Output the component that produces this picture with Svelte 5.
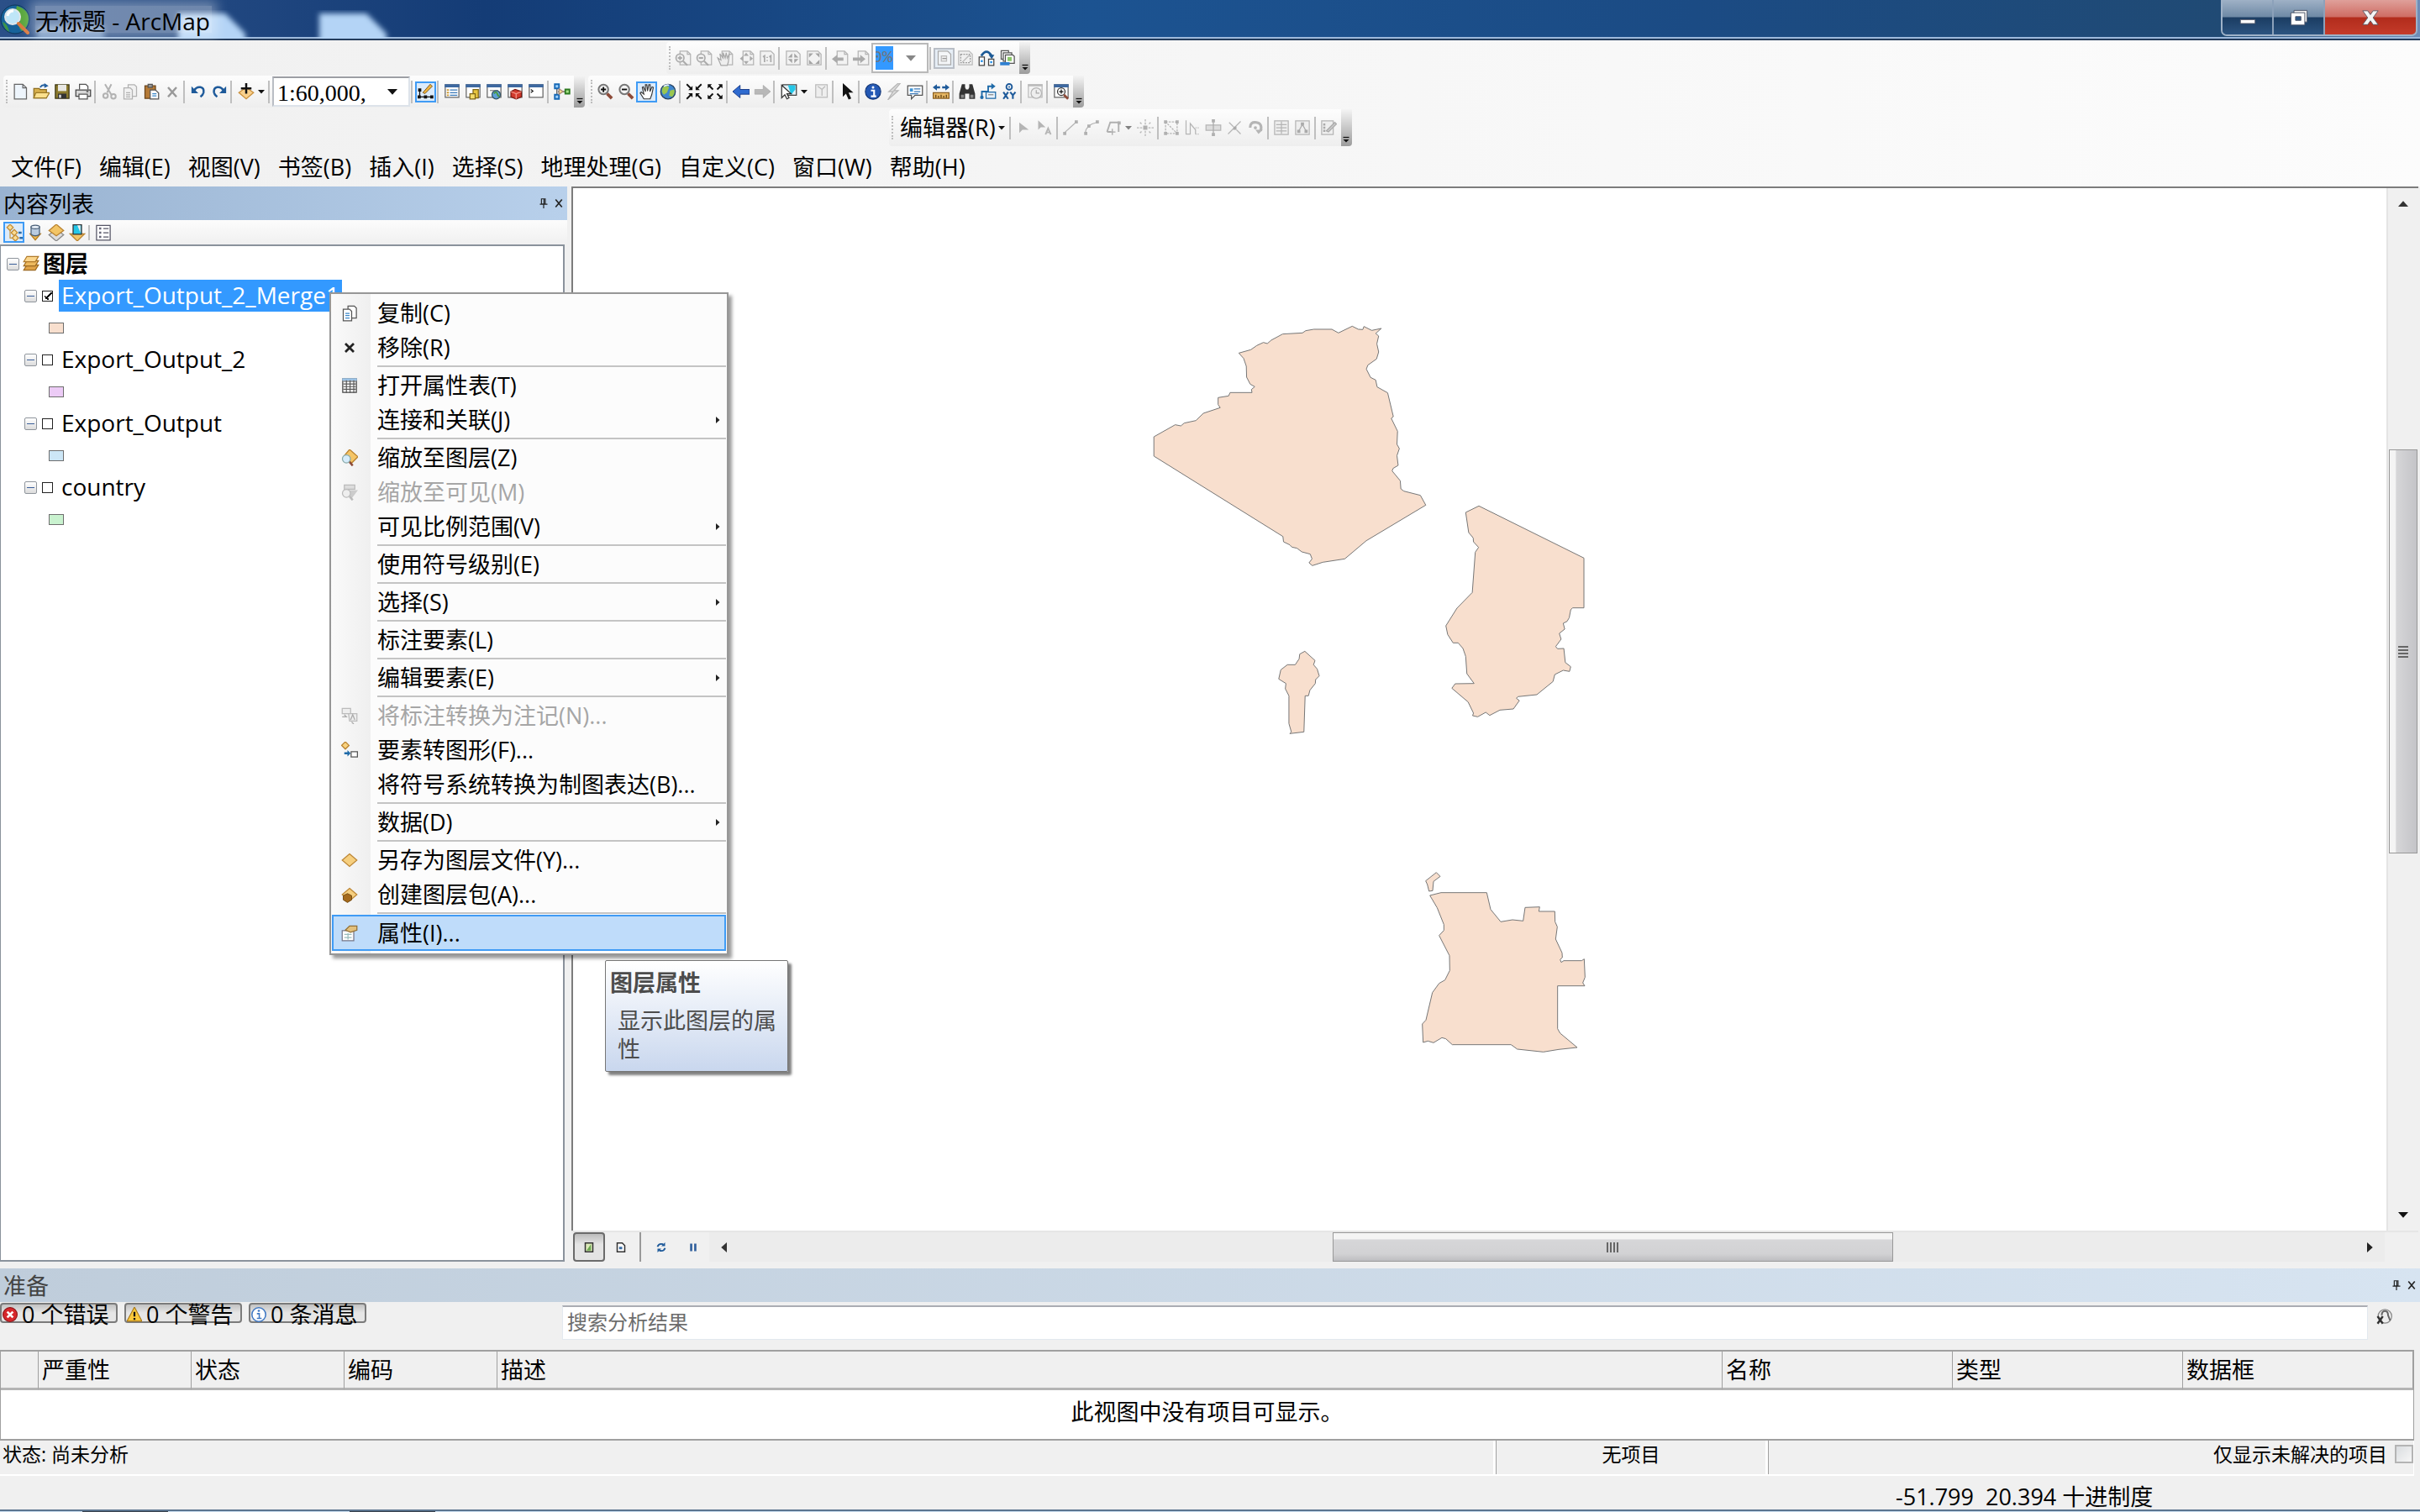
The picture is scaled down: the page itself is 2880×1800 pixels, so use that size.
<script lang="ts">
    interface Tool {
        icon?: string;
        label?: string;
        kind?: "sep" | "active" | "drop" | "scale" | "percent" | "editor";
        off?: boolean;
    }

    interface MenuItem {
        label: string;
        icon?: string;
        sub?: boolean;
        off?: boolean;
        current?: boolean;
        line?: boolean;
    }

    const sep: Tool = { kind: "sep" };

    // shared icon parts, all on a 16 unit grid
    const page = `<path d="M5 1.5h7l3 3v10H5z" fill="#f2f2f2" stroke="#b4b4b4"/><path d="M12 1.5v3h3" fill="none" stroke="#b4b4b4"/>`;
    const win = `<rect x="1.5" y="1.5" width="13" height="12" fill="#fff" stroke="#666"/><path d="M1 1h14v3H1z" fill="#3d68a0"/>`;
    const lens = `<circle cx="6.5" cy="6" r="4.6" fill="#f4f4f4" stroke="#777" stroke-width="1.6"/><path d="M10 10l4.5 4.5" stroke="#8c4a38" stroke-width="3"/>`;
    const diamond = `<path d="M8 2l7 6-7 6-7-6z" fill="#f6cf7f" stroke="#bd8736"/>`;

    const icons: Record<string, string> = {
        newDoc: `<path d="M2.500 1h8l3.500 3.500V15h-11.500z" fill="#eef5fc" stroke="#666"/><path d="M10.500 1v3.500H14" fill="none" stroke="#666"/>`,
        open: `<path d="M1 5h5l1 1h6v8H1z" fill="#d8b04c" stroke="#8d6d20"/><path d="M3 9h13l-3 5H1z" fill="#fbe08d" stroke="#9a7927"/><path d="M7 4q2-3 5-2" fill="none" stroke="#2560a0" stroke-width="1.500"/><path d="M11 0l4 2.500-4 2z" fill="#2560a0"/>`,
        save: `<path d="M1.500 1.500h13v13h-13z" fill="#8c7b2e" stroke="#3d3714"/><path d="M4 1.500h8v6H4z" fill="#e8e8e4"/><path d="M4 10h8v4.500H4z" fill="#333"/><path d="M5 11h2v3H5z" fill="#ddd"/>`,
        print: `<path d="M4.500 6V1h6l2 2v3" fill="#fff" stroke="#555"/><path d="M1 6.500h14v6H1z" fill="#d8d8d8" stroke="#444"/><path d="M4 10.500h8v4.500H4z" fill="#fff" stroke="#555"/><path d="M11 8h2" stroke="#333"/>`,
        cut: `<g fill="none" stroke="#b2b2b2" stroke-width="1.600"><path d="M4 1l6 10M10 1L6 9"/><circle cx="4.500" cy="12" r="2.200"/><circle cx="12" cy="12.500" r="2.200"/></g>`,
        copyOff: `<g fill="#f2f2f2" stroke="#b2b2b2"><path d="M6 1.500h6l2 2v9H6z"/><path d="M2 4.500h6l2 2v8.500H2z"/><path d="M4 9h4M4 11h4M4 13h4"/></g>`,
        paste: `<path d="M2 2.500h10v12H2z" fill="#b57a37" stroke="#6b451b"/><path d="M5 1h4v3H5z" fill="#999" stroke="#555"/><path d="M7 6.500h5l3 3V15H7z" fill="#fff" stroke="#555"/><path d="M9 10h4M9 12h4" stroke="#3b88c9"/>`,
        del: `<path d="M4 4l8 9M12 4l-8 9" stroke="#999" stroke-width="2"/>`,
        undo: `<path d="M4 7c3-5 10-4 9 2-.500 2-1.500 3-3 4" fill="none" stroke="#1e5a9a" stroke-width="2"/><path d="M1.500 3v6.500H8z" fill="#1e5a9a"/>`,
        redo: `<path d="M12 7C9 2 2 3 3 9c.500 2 1.500 3 3 4" fill="none" stroke="#1e5a9a" stroke-width="2"/><path d="M14.500 3v6.500H8z" fill="#1e5a9a"/>`,
        add: `<path d="M8 4l7 5-7 6-7-6z" fill="#f9d08c" stroke="#c98f3b"/><path d="M8 0v10M3 5h10" stroke="#111" stroke-width="2"/>`,
        sketch: `<path d="M2 6v7h12" fill="none" stroke="#111"/><path d="M0 11.500h3v3H0zM6 11.500h3v3H6zM12 11.500h3v3h-3zM.500 5h3v3h-3z" fill="#111"/><path d="M5 9l7-8 2 2-7 7z" fill="#f0b33a" stroke="#7b5b2a" stroke-width=".800"/>`,
        toc: `${win}<path d="M3 6.500h2M3 9h2M3 11.500h2" stroke="#cc9933" stroke-width="1.500"/><path d="M6 6.500h7M6 9h7M6 11.500h7" stroke="#3878b8"/>`,
        catalog: `${win}<path d="M8 6h5v8H8z" fill="#e8c53e" stroke="#7e6515"/><path d="M5 10h5v5H5z" fill="#f4dc6a" stroke="#7e6515"/>`,
        searchWin: `${win}<path d="M4 7h8" stroke="#888"/><circle cx="10" cy="11" r="4" fill="#5ea0d8" stroke="#356"/><path d="M8 10q2-3 3 0t2 2" stroke="#4c9b3d" fill="none" stroke-width="1.500"/>`,
        toolbox: `${win}<path d="M4 8l4-2 6 2v5l-5 2-5-2z" fill="#d23a2c" stroke="#7c1a12"/><path d="M4 8l5 2 5-2M9 10v5" stroke="#f39a8c" fill="none"/>`,
        python: `${win}<path d="M3 6l2 1.500L3 9" fill="none" stroke="#222"/>`,
        model: `<path d="M3 3v10M4 8h9" stroke="#555"/><path d="M1 1h4v4H1zM1 11h4v4H1z" fill="#9ed2ff" stroke="#1668b5" stroke-width="1.500"/><path d="M5 5.500l4 2.500-4 2.500z" fill="#ffe28a" stroke="#a87"/><path d="M11 6h4v4h-4z" fill="#a9e38a" stroke="#2d7a20" stroke-width="1.500"/>`,
        zoomIn: `${lens}<path d="M4 6h5M6.500 3.500v5" stroke="#111" stroke-width="1.500"/>`,
        zoomOut: `${lens}<path d="M4 6h5" stroke="#111" stroke-width="1.500"/>`,
        hand: `<path d="M5 15L1.500 9.500l1-1L5 10.500 3.500 4l1-.500L6.500 8 6.500 1.500h1.300L8.500 7.500l1.200-6H11L10.800 8l2-4.500 1.200.500-1.500 7-1.500 4z" fill="#fff" stroke="#333" stroke-width=".900"/>`,
        globe: `<circle cx="8" cy="8" r="7" fill="#3f86cf" stroke="#26405f"/><path d="M3 4q4-3 6 0l-2 5-3 2q-3-3-1-7zM10 7l4-1q1 4-2 7l-3-1z" fill="#9bc64e"/><path d="M4 3q3-2 5-1" stroke="#e8f3ff" stroke-width="1.500" fill="none"/>`,
        fixedIn: `<path d="M1 1l4 4M15 1l-4 4M1 15l4-4M15 15l-4-4" stroke="#111" stroke-width="1.500"/><path d="M6.500 6.500h-4l4-4zM9.500 6.500h4l-4-4zM6.500 9.500h-4l4 4zM9.500 9.500h4l-4 4z" fill="#111"/>`,
        fixedOut: `<path d="M2 2l4 4M14 2l-4 4M2 14l4-4M14 14l-4-4" stroke="#111" stroke-width="1.500"/><path d="M1 1h4L1 5zM15 1h-4l4 4zM1 15h4l-4-4zM15 15h-4l4-4z" fill="#111"/>`,
        back: `<path d="M0 8l7-6v4h9v4.500H7V14z" fill="#2f6bd0" stroke="#1c3f8c" stroke-width=".800"/>`,
        forward: `<path d="M16 8L9 2v4H1v4.500h8V14z" fill="#b8b8b8" stroke="#a2a2a2" stroke-width=".500"/>`,
        select: `<path d="M2 1.500h13v10H2z" fill="#dfeff5" stroke="#444"/><path d="M7 2h7v4l-4 5z" fill="#25c7e8"/><path d="M1 2v12l3-3 2 4 2-1-2-4h4z" fill="#fff" stroke="#333"/>`,
        clear: `<path d="M3 1.500h11v12H3z" fill="#eee" stroke="#bbb"/><path d="M5 3l4 3 3-3M9 6v6" fill="none" stroke="#bbb"/>`,
        pointer: `<path d="M4 0v13l3-3 2.500 5.500 2.500-1L9.500 9H14z" fill="#111"/>`,
        info: `<circle cx="8" cy="8" r="7.300" fill="#2459b5" stroke="#173b7c"/><path d="M6 7h3v5M6 12.500h5" stroke="#fff" stroke-width="1.700" fill="none"/><circle cx="8" cy="4" r="1.200" fill="#fff"/>`,
        bolt: `<path d="M12 0L3 8h4L2 16l10-9H8l6-7z" fill="#ddd" stroke="#b5b5b5"/>`,
        popup: `<path d="M1 2.500h14v9H8L4.500 15v-3.500H1z" fill="#fff" stroke="#555"/><path d="M3 5h3v3H3z" fill="#3d93d6"/><path d="M7 5.500h6M7 8h6M3 10h8" stroke="#3878b8"/>`,
        measure: `<path d="M0 4l4-3v2h3v2H4v2zM16 4l-4-3v2H9v2h3v2z" fill="#1e5a9a"/><path d="M.500 9h15v5.500H.500z" fill="#e6b765" stroke="#8c6021"/><path d="M3 11v3M5.500 12v2M8 11v3M10.500 12v2M13 11v3" stroke="#5b3c10"/>`,
        find: `<path d="M3 1h3v3l1 2h2l1-2V1h3l2.500 9v5H10v-5H6v5H.500v-5z" fill="#333"/><path d="M2 11h3v3H2zM11 11h3v3h-3z" fill="#888"/>`,
        route: `<path d="M2 14V8h6V3h4" fill="none" stroke="#1e6aa8" stroke-width="1.500"/><path d="M11 0l4 3-4 3z" fill="#1e6aa8"/><circle cx="2" cy="13.500" r="1.700" fill="#1e6aa8"/><path d="M6 8.500h9v6H6z" fill="#e6f1fa" stroke="#1e6aa8"/><path d="M8 11h5" stroke="#888"/>`,
        xy: `<circle cx="8" cy="3.500" r="2.700" fill="none" stroke="#1e5a9a" stroke-width="1.500"/><circle cx="8" cy="3.500" r=".800" fill="#1e5a9a"/><path d="M2.500 8.500l4.500 6.500M7 8.500L2.500 15M9 8.500l2.500 3 2.500-3M11.500 11.500V15" stroke="#1e5a9a" stroke-width="1.700" fill="none"/>`,
        clock: `<path d="M1.500 1.500h13v12h-13z" fill="#f4f4f4" stroke="#bbb"/><path d="M1 1h14v2H1z" fill="#bbb"/><circle cx="9" cy="9.500" r="5" fill="#eee" stroke="#b5b5b5"/><path d="M9 6.500v3h3" stroke="#aaa" fill="none"/>`,
        magnifier: `${win}<circle cx="8" cy="8" r="3.600" fill="#fff" stroke="#333"/><path d="M6 8h4M8 6v4" stroke="#111"/><path d="M10.500 11l4 4" stroke="#8c4a38" stroke-width="2.200"/>`,
        pageIn: `${page}<circle cx="5" cy="8" r="3.800" fill="#eee" stroke="#aaa" stroke-width="1.300"/><path d="M3 8h4M5 6v4M8 11l4 4" stroke="#aaa" stroke-width="1.500"/>`,
        pageOut: `${page}<circle cx="5" cy="8" r="3.800" fill="#eee" stroke="#aaa" stroke-width="1.300"/><path d="M3 8h4M8 11l4 4" stroke="#aaa" stroke-width="1.500"/>`,
        pageHand: `${page}<path d="M4 15L1 8l3 2L3 4l3 4V3l2 5 1-5 1 5 2-4-1 8-1 3z" fill="#eee" stroke="#aaa"/>`,
        pageFull: `${page}<path d="M8 3l2.500 3h-5zM8 14l2.500-3h-5zM2 8.500L5 6v5zM14.500 8.500l-3-2.500v5z" fill="#aaa"/>`,
        pageOne: `<path d="M1.500 1.500h10l3 3v10h-13z" fill="#f2f2f2" stroke="#b4b4b4"/><path d="M4 7l1.500-1v6M10 7l1.500-1v6M8 7v1M8 10v1" fill="none" stroke="#aaa" stroke-width="1.400"/>`,
        pageFixIn: `<path d="M1.500 1.500h10l3 3v10h-13z" fill="#f2f2f2" stroke="#b4b4b4"/><path d="M7 7.500H3l4-4zM9 7.500h4l-4-4zM7 9H3l4 4zM9 9h4l-4 4z" fill="#a5a5a5"/>`,
        pageFixOut: `<path d="M1.500 1.500h10l3 3v10h-13z" fill="#f2f2f2" stroke="#b4b4b4"/><path d="M3 3.500h4l-4 4zM13 3.500H9l4 4zM3 13.500h4l-4-4zM13 13.500H9l4-4z" fill="#a5a5a5"/>`,
        pageBack: `${page}<path d="M0 9l5-4v2.500h6v3H5V13z" fill="#aaa"/>`,
        pageNext: `${page}<path d="M12 9L7 5v2.500H0v3h7V13z" fill="#aaa"/>`,
        draft: `<path d="M2 1.500h9l3 3v10H2z" fill="#f4f6f8" stroke="#aaa"/><path d="M5 6h5v5H5z" fill="#eee" stroke="#bbb"/><path d="M6 8.500h4" stroke="#999"/>`,
        focus: `<path d="M1.500 1.500h10l3 3v10h-13z" fill="#f0f0f0" stroke="#bbb"/><path d="M3.500 4.500h9v8h-9z" fill="none" stroke="#999" stroke-dasharray="1.500 1"/><path d="M5 12l7-7" stroke="#bbb"/>`,
        change: `<path d="M3 6q5-8 10 0" fill="none" stroke="#1c5a96" stroke-width="2.200"/><path d="M10 5h5.500L13 9z" fill="#1c5a96"/><path d="M1 7h5v8H1zM10 9h5v6h-5z" fill="#fff" stroke="#444"/><path d="M2.500 10h2v2h-2zM11.500 11h2v2h-2z" fill="#2f94e8"/>`,
        pages: `<path d="M2 1h7v8H2z" fill="#fff" stroke="#555"/><path d="M4 3h8v8H4z" fill="#fff" stroke="#555"/><path d="M6 5h7l1.500 1.500V13H6z" fill="#fff" stroke="#555"/><path d="M8 7h4v4H8z" fill="#8cc66a"/><path d="M1 12h9v3H1z" fill="#2f80d0"/>`,
        arrowOff: `<path d="M4 3v10l3-3h6z" fill="#b5b5b5"/>`,
        arrowA: `<path d="M2 1v9l2.500-2.500H9z" fill="#b5b5b5"/><path d="M9 14.500l2.500-6 2.500 6M10 12.500h3" stroke="#b5b5b5" fill="none" stroke-width="1.500"/>`,
        line: `<path d="M2 13L13 3" stroke="#b5b5b5"/><path d="M1 12h3v3H1zM12 1h3v3h-3z" fill="#b0b0b0"/>`,
        arc: `<path d="M2 13Q3 5 13 3" stroke="#b5b5b5" fill="none"/><path d="M1 12h3v3H1zM12 1h3v3h-3zM4 5h3v3H4z" fill="#b0b0b0"/>`,
        trace: `<path d="M2 12L5 3h8v9M2 12h4" stroke="#b0b0b0" fill="none" stroke-width="1.500"/><path d="M7 9v6M4 12h6" stroke="#aaa"/><path d="M12 2h3v3h-3z" fill="#b0b0b0"/>`,
        snap: `<path d="M8 0v5M8 11v5M0 8h5M11 8h5M3 3l2 2M13 3l-2 2M3 13l2-2M13 13l-2-2" stroke="#b5b5b5" stroke-dasharray="2 1"/><path d="M6 6h4v4H6z" fill="#b0b0b0"/>`,
        reshape: `<path d="M2.500 2.500v11h11zM2.500 2.500h11v11" fill="none" stroke="#b5b5b5" stroke-dasharray="2 1"/><path d="M1 1h3v3H1zM12 1h3v3h-3zM1 12h3v3H1zM12 12h3v3h-3z" fill="#b0b0b0"/>`,
        cutPoly: `<path d="M2 1v13h4V4l5 6v4" fill="none" stroke="#b5b5b5"/><path d="M11 8h4M11 14h4" stroke="#b5b5b5" stroke-dasharray="1 1"/>`,
        split: `<path d="M1 5.500h14v5H1z" fill="#ddd" stroke="#b5b5b5"/><path d="M8 1v14" stroke="#aaa"/><path d="M6.500 0h3v3h-3zM6.500 13h3v3h-3z" fill="#b0b0b0"/>`,
        splitLine: `<path d="M2 14L14 2M3 3l4 4M10 10l4 4" stroke="#b5b5b5"/><path d="M7 7h3v3H7z" fill="#aaa"/>`,
        rotate: `<path d="M3 8q0-6 6-5t4 8" fill="none" stroke="#b5b5b5" stroke-width="2.500"/><path d="M8 10h7l-4 4z" fill="#b5b5b5"/><circle cx="8" cy="8" r="1.500" fill="#b5b5b5"/>`,
        attrs: `<path d="M1.500 1.500h13v13h-13z" fill="#eee" stroke="#b5b5b5"/><path d="M3 5h10M3 8h10M3 11h10M8 2v12" stroke="#b5b5b5"/>`,
        props: `<path d="M1.500 1.500h13v13h-13z" fill="#eee" stroke="#b5b5b5"/><path d="M4 12l4-7 4 7" stroke="#aaa" fill="none"/><path d="M6.500 3h3v3h-3zM3 10h3v3H3zM10 10h3v3h-3z" fill="#aaa"/>`,
        template: `<path d="M1.500 1.500h11v13h-11z" fill="#eee" stroke="#b5b5b5"/><path d="M3 4h2v2H3zM3 7h2v2H3zM3 10h2v2H3z" fill="#aaa"/><path d="M6 11l8-8 1.500 1.500L8 12z" fill="#ccc" stroke="#aaa"/>`,
        byDraw: `<path d="M4 6v7h4M8 6v6" stroke="#c99a45" fill="none"/><path d="M4 0l3 3-3 3-3-3zM8 5l3 3-3 3-3-3zM9 10l3 3-3 3-3-3z" fill="#f9dd95" stroke="#c48d35"/><path d="M12 8h3M13 13h3" stroke="#2c6ca8" stroke-width="2"/>`,
        bySource: `<path d="M3 9h10l-5 6z" fill="#f0bb52" stroke="#b67d22"/><path d="M4 2.500v7q4 3 8 0v-7z" fill="#b9cbe0" stroke="#4b6078"/><ellipse cx="8" cy="2.500" rx="4" ry="1.700" fill="#e8f0f8" stroke="#4b6078"/>`,
        byVisible: `<path d="M8 5l7 5-7 6-7-6z" fill="#ddd" stroke="#888"/><path d="M8 0l7 6-7 5-7-5z" fill="#f3c566" stroke="#b9822f"/>`,
        bySelect: `<path d="M1 9h14l-7 7z" fill="#f3c566" stroke="#b9822f"/><path d="M4 .500h8v9H4z" fill="#25c7e8" stroke="#333"/><path d="M8 1h3v7z" fill="#eee"/>`,
        options: `<path d="M1.500 1h13v14h-13z" fill="#fff" stroke="#556"/><path d="M4 3h2v2H4zM4 7h2v2H4zM4 11h2v2H4z" fill="#667"/><path d="M8 4h5M8 8h5M8 12h5" stroke="#556"/>`,
        layers: `<path d="M4 9h11l-3 5H1z" fill="#e0a348" stroke="#9d6a20"/><path d="M4 5h11l-3 5H1z" fill="#edb95f" stroke="#9d6a20"/><path d="M4 1h11l-3 5H1z" fill="#fbd68c" stroke="#b07a2a"/>`,
        copy: `<path d="M6.500 1h6l2 2v9.500h-8z" fill="#fff" stroke="#555"/><path d="M2 4h6l2 2v9H2z" fill="#fff" stroke="#555"/><path d="M4 8h4M4 10h4M4 12.500h4" stroke="#3b88c9"/>`,
        remove: `<path d="M4 4l8 8M12 4l-8 8" stroke="#222" stroke-width="2.200"/>`,
        table: `<path d="M1.500 1.500h13v13h-13z" fill="#fff" stroke="#444"/><path d="M1 1h14v2.500H1z" fill="#9cc3e6"/><path d="M2 4h12M2 6.500h12M2 9h12M2 11.500h12M5 3v12M8.500 3v12M12 3v12" stroke="#555" stroke-width=".900"/>`,
        zoomLayer: `<path d="M8 0l8 7-6 6-7-7z" fill="#f5c566" stroke="#b9822f"/><circle cx="5" cy="9" r="3.800" fill="#d6ecfb" stroke="#8aa"/><path d="M8 12l3 3.500" stroke="#8c4a38" stroke-width="2"/>`,
        zoomVisible: `<path d="M3 1h10v4H3z" fill="#ddd" stroke="#bbb"/><path d="M2 6h14l-6 8z" fill="#ccc"/><circle cx="5" cy="9" r="3.800" fill="#eee" stroke="#bbb"/><path d="M8 12l3 3.500" stroke="#bbb" stroke-width="2"/>`,
        annot: `<path d="M1 1h8v5H1zM7 6h8v7H8z" fill="#eee" stroke="#bbb"/><path d="M1 9h4l-2-2M9 12l2-5 2 5M10 14l2 2" stroke="#aaa" fill="none"/>`,
        graphic: `<path d="M4 0l3.500 3.500L4 7 .500 3.500z" fill="#f9d27f" stroke="#b9822f"/><path d="M3 10h3V8l3 3-3 3v-2H3z" fill="#1e6aa8"/><path d="M9.500 9.500h6v5h-6z" fill="#fff" stroke="#555"/>`,
        layerFile: diamond,
        pack: `${diamond}<path d="M2 9l4-2 4 2v4l-4 2.500L2 13z" fill="#a56a1c" stroke="#6c430c" stroke-width=".700"/>`,
        properties: `<path d="M1 5.500h11v9.500H1z" fill="#fff" stroke="#778"/><path d="M3 9h7M3 12h7M6.500 8v6" stroke="#9bb"/><path d="M4 5l4-4h7v4l-6 2z" fill="#e2c07c" stroke="#927037"/>`,
        dataView: `<path d="M2 1h12v14H2z" fill="#dbe9b8" stroke="#333" stroke-width="2"/><path d="M4 13l7-10v10z" fill="#6aa84f"/>`,
        layoutView: `<path d="M2 1h8l4 4v10H2z" fill="#fff" stroke="#333" stroke-width="2"/><path d="M5 7h5v4H5z" fill="#3c6ea5"/>`,
        refresh: `<path d="M2 7q2-6 9-4M14 9q-2 6-9 4" fill="none" stroke="#1e5a9a" stroke-width="2.500"/><path d="M14 0v6H8zM2 16v-6h6z" fill="#1e5a9a"/>`,
        pause: `<path d="M3 2h3.500v12H3zM9.500 2H13v12H9.500z" fill="#2f5f9c"/>`,
        error: `<circle cx="8" cy="8" r="7.500" fill="#d7282c" stroke="#8e1619"/><path d="M5 5l6 6M11 5l-6 6" stroke="#fff" stroke-width="2.400"/>`,
        warning: `<path d="M8 0l8 15H0z" fill="#fcc93a" stroke="#a9791a"/><path d="M8 5v5M8 11.500v2" stroke="#111" stroke-width="2"/>`,
        message: `<circle cx="8" cy="8" r="7.300" fill="#fff" stroke="#3f78c4" stroke-width="1.400"/><path d="M6 7h2.500v5M6 12h5" fill="none" stroke="#3f78c4" stroke-width="1.400"/><circle cx="8" cy="4" r="1.200" fill="#3f78c4"/>`,
        clearSearch: `<circle cx="9" cy="8" r="6.500" fill="#eee" stroke="#888"/><path d="M6 7q0-4 3-4t3 4l2 5" fill="none" stroke="#666" stroke-width="1.600"/><path d="M2 8l5 7M7 8l-5 7" stroke="#333" stroke-width="2"/>`,
        pin: `<path d="M4.500 1h6v8h-6zM8.500 1v8M2 9.500h12M8 10v6" fill="none" stroke="#222" stroke-width="1.600"/>`,
        close: `<path d="M3 2l10 12M13 2L3 14" stroke="#222" stroke-width="2.200"/>`,
        down: `<path d="M0 4h16L8 13z" fill="#111"/>`,
        up: `<path d="M0 12h16L8 3z" fill="#333"/>`,
        left: `<path d="M12 0v16L3 8z" fill="#333"/>`,
        right: `<path d="M4 0v16l9-8z" fill="#222"/>`,
        overflow: `<path d="M1 3h14" stroke="#111" stroke-width="2.500"/><path d="M1 8h14l-7 7z" fill="#111"/>`,
    };

    const layoutTools: Tool[] = [
        { icon: "pageIn", label: "放大" },
        { icon: "pageOut", label: "缩小" },
        { icon: "pageHand", label: "平移" },
        { icon: "pageFull", label: "缩放整个页面" },
        { icon: "pageOne", label: "缩放至 100%" },
        sep,
        { icon: "pageFixIn", label: "固定比例放大" },
        { icon: "pageFixOut", label: "固定比例缩小" },
        sep,
        { icon: "pageBack", label: "返回范围" },
        { icon: "pageNext", label: "前进范围" },
        { kind: "percent" },
        sep,
        { icon: "draft", label: "切换描绘模式", kind: "active", off: true },
        { icon: "focus", label: "焦点数据框" },
        { icon: "change", label: "更改布局" },
        { icon: "pages", label: "数据驱动页面" },
    ];

    const standardTools: Tool[] = [
        { icon: "newDoc", label: "新建" },
        { icon: "open", label: "打开" },
        { icon: "save", label: "保存" },
        { icon: "print", label: "打印" },
        sep,
        { icon: "cut", label: "剪切" },
        { icon: "copyOff", label: "复制" },
        { icon: "paste", label: "粘贴" },
        { icon: "del", label: "删除" },
        sep,
        { icon: "undo", label: "撤消" },
        { icon: "redo", label: "恢复" },
        sep,
        { icon: "add", label: "添加数据", kind: "drop" },
        sep,
        { kind: "scale" },
        sep,
        { icon: "sketch", label: "编辑器工具条", kind: "active" },
        sep,
        { icon: "toc", label: "内容列表" },
        { icon: "catalog", label: "目录" },
        { icon: "searchWin", label: "搜索" },
        { icon: "toolbox", label: "工具箱" },
        { icon: "python", label: "Python" },
        sep,
        { icon: "model", label: "模型构建器" },
    ];

    const mapTools: Tool[] = [
        { icon: "zoomIn", label: "放大" },
        { icon: "zoomOut", label: "缩小" },
        { icon: "hand", label: "平移", kind: "active" },
        { icon: "globe", label: "全图" },
        sep,
        { icon: "fixedIn", label: "固定比例放大" },
        { icon: "fixedOut", label: "固定比例缩小" },
        sep,
        { icon: "back", label: "后退" },
        { icon: "forward", label: "前进" },
        sep,
        { icon: "select", label: "选择要素", kind: "drop" },
        { icon: "clear", label: "清除所选要素" },
        sep,
        { icon: "pointer", label: "选择元素" },
        sep,
        { icon: "info", label: "识别" },
        { icon: "bolt", label: "超链接" },
        { icon: "popup", label: "HTML 弹出窗口" },
        sep,
        { icon: "measure", label: "测量" },
        sep,
        { icon: "find", label: "查找" },
        { icon: "route", label: "查找路径" },
        { icon: "xy", label: "转到 XY" },
        sep,
        { icon: "clock", label: "时间滑块" },
        sep,
        { icon: "magnifier", label: "查看器窗口" },
    ];

    const editTools: Tool[] = [
        { kind: "editor" },
        sep,
        { icon: "arrowOff", label: "编辑工具" },
        { icon: "arrowA", label: "编辑注记" },
        sep,
        { icon: "line", label: "直线段" },
        { icon: "arc", label: "弧线段" },
        { icon: "trace", label: "追踪", kind: "drop", off: true },
        { icon: "snap", label: "点" },
        sep,
        { icon: "reshape", label: "编辑折点" },
        { icon: "cutPoly", label: "整形要素" },
        { icon: "split", label: "裁剪面" },
        { icon: "splitLine", label: "分割" },
        { icon: "rotate", label: "旋转" },
        sep,
        { icon: "attrs", label: "属性" },
        { icon: "props", label: "草图属性" },
        sep,
        { icon: "template", label: "创建要素" },
    ];

    const menus = [
        "文件(F)", "编辑(E)", "视图(V)", "书签(B)", "插入(I)",
        "选择(S)", "地理处理(G)", "自定义(C)", "窗口(W)", "帮助(H)",
    ];

    const layers = $state([
        { name: "Export_Output_2_Merge1", color: "#f8dfce", visible: true, selected: true },
        { name: "Export_Output_2", color: "#eccbf6", visible: false, selected: false },
        { name: "Export_Output", color: "#cce6f6", visible: false, selected: false },
        { name: "country", color: "#c9f2cf", visible: false, selected: false },
    ]);

    const menuItems: MenuItem[] = [
        { label: "复制(C)", icon: "copy" },
        { label: "移除(R)", icon: "remove", line: true },
        { label: "打开属性表(T)", icon: "table" },
        { label: "连接和关联(J)", sub: true, line: true },
        { label: "缩放至图层(Z)", icon: "zoomLayer" },
        { label: "缩放至可见(M)", icon: "zoomVisible", off: true },
        { label: "可见比例范围(V)", sub: true, line: true },
        { label: "使用符号级别(E)", line: true },
        { label: "选择(S)", sub: true, line: true },
        { label: "标注要素(L)", line: true },
        { label: "编辑要素(E)", sub: true, line: true },
        { label: "将标注转换为注记(N)...", icon: "annot", off: true },
        { label: "要素转图形(F)...", icon: "graphic" },
        { label: "将符号系统转换为制图表达(B)...", line: true },
        { label: "数据(D)", sub: true, line: true },
        { label: "另存为图层文件(Y)...", icon: "layerFile" },
        { label: "创建图层包(A)...", icon: "pack", line: true },
        { label: "属性(I)...", icon: "properties", current: true },
    ];

    const counters = [
        { icon: "error", text: "0 个错误" },
        { icon: "warning", text: "0 个警告" },
        { icon: "message", text: "0 条消息" },
    ];
</script>

{#snippet glyph(name: string, cls = "")}
    <svg class="glyph {cls}" viewBox="0 0 16 16" aria-hidden="true">{@html icons[name]}</svg>
{/snippet}

{#snippet toolbar(tools: Tool[], name: string)}
    <div class="toolbar" role="toolbar" aria-label={name}>
        <span class="grip"></span>
        {#each tools as t}
            {#if t.kind === "sep"}
                <span class="sep"></span>
            {:else if t.kind === "scale"}
                <span class="combo scale">
                    <select aria-label="比例"><option>1:60,000,</option></select>
                    {@render glyph("down", "small")}
                </span>
            {:else if t.kind === "percent"}
                <span class="combo percent">
                    <input aria-label="缩放百分比" value="0%" />
                    {@render glyph("down", "small dim")}
                </span>
            {:else if t.kind === "editor"}
                <button class="editor">编辑器(R){@render glyph("down", "tiny")}</button>
            {:else}
                <button
                    class="tool"
                    class:active={t.kind === "active"}
                    class:drop={t.kind === "drop"}
                    class:off={t.off}
                    aria-label={t.label}
                >
                    {@render glyph(t.icon ?? "")}
                    {#if t.kind === "drop"}{@render glyph("down", t.off ? "tiny dim" : "tiny")}{/if}
                </button>
            {/if}
        {/each}
        <button class="overflow" aria-label="工具条选项">{@render glyph("overflow", "tiny")}</button>
    </div>
{/snippet}

{#snippet dockButtons()}
    <span class="dock-buttons">
        <button aria-label="自动隐藏">{@render glyph("pin", "small")}</button>
        <button aria-label="关闭">{@render glyph("close", "small")}</button>
    </span>
{/snippet}

<div class="app">
    <header class="titlebar">
        <svg class="glass" viewBox="0 0 480 46" aria-hidden="true">
            <defs><filter id="soft"><feGaussianBlur stdDeviation="3" /></filter></defs>
            <g filter="url(#soft)" fill="#b4d4f6">
                <path d="M44 30h80v24H44z" opacity=".5" />
                <path d="M212 16h56l24 24v14h-80z" />
                <path d="M380 16h56l24 24v14h-80z" />
            </g>
        </svg>
        <svg class="logo" viewBox="0 0 36 38" aria-hidden="true">
            <circle cx="18" cy="19" r="17" fill="#17629a" stroke="#0d3455" />
            <path d="M20 3q14 4 14 16-1 10-8 14-6-6-2-12-8-6-4-18z" fill="#58a63c" />
            <path d="M3 22q6 2 8 12-6-3-8-12z" fill="#3f9648" />
            <circle cx="15" cy="16" r="9" fill="#bfe6f8" stroke="#e0e6ea" stroke-width="2" />
            <path d="M9 15q1-6 7-6" fill="none" stroke="#fff" stroke-width="3" />
            <path d="M22 24l11 11" stroke="#d9773c" stroke-width="4" stroke-linecap="round" />
        </svg>
        <h1>无标题 - ArcMap</h1>
        <div class="win-buttons">
            <button aria-label="最小化">
                <svg viewBox="0 0 24 24"><path d="M2.500 13.500h19v5h-19z" fill="#fff" stroke="#555b6b" /></svg>
            </button>
            <button aria-label="还原">
                <svg viewBox="0 0 24 24">
                    <path d="M5.500 1.500h17v15h-17z" fill="#eee" stroke="#4a5266" />
                    <path d="M1.500 4.500h18v16h-18z" fill="#fff" stroke="#4a5266" />
                    <path d="M7.500 9.500h7v5h-7z" fill="#2c5684" stroke="#4a5266" />
                </svg>
            </button>
            <button class="quit" aria-label="关闭">
                <svg viewBox="0 0 24 24">
                    <path d="M2 2h6.500L12 7l3.500-5H22l-6.500 9L22 20h-6.500L12 15l-3.500 5H2l6.500-9z" fill="#f4f4f4" stroke="#5d5560" />
                </svg>
            </button>
        </div>
    </header>

    <div class="bars">
        <div class="row first">{@render toolbar(layoutTools, "布局")}</div>
        <div class="row">
            {@render toolbar(standardTools, "标准工具")}
            {@render toolbar(mapTools, "工具")}
        </div>
        <div class="row third">{@render toolbar(editTools, "编辑器")}</div>
        <nav>
            {#each menus as m}<button>{m}</button>{/each}
        </nav>
    </div>

    <main>
        <aside>
            <div class="dock-title">
                <h2>内容列表</h2>
                {@render dockButtons()}
            </div>
            <div class="toc-tools">
                <button class="tool active" aria-label="按绘制顺序列出">{@render glyph("byDraw")}</button>
                <button class="tool" aria-label="按源列出">{@render glyph("bySource")}</button>
                <button class="tool" aria-label="按可见性列出">{@render glyph("byVisible")}</button>
                <button class="tool" aria-label="按选择列出">{@render glyph("bySelect")}</button>
                <span class="sep"></span>
                <button class="tool" aria-label="选项">{@render glyph("options")}</button>
            </div>
            <div class="tree">
                <div class="node root">
                    <button class="fold" aria-label="折叠"></button>
                    {@render glyph("layers")}
                    <strong>图层</strong>
                </div>
                {#each layers as layer, i}
                    <div class="node">
                        <button class="fold" aria-label="折叠"></button>
                        <input id="layer-{i}" type="checkbox" bind:checked={layer.visible} />
                        <label for="layer-{i}" class:selected={layer.selected}>{layer.name}</label>
                    </div>
                    <div class="node symbol">
                        <span class="swatch" style="background: {layer.color}"></span>
                    </div>
                {/each}
            </div>
        </aside>

        <section class="view">
            <div class="canvas">
                <svg class="map" role="img" aria-label="地图">
                    <g transform="translate(678 146) scale(.357143 .333333)">
                        <path d="M320 151L360 139 380 124 402 113 415 117 428 105 466 83 532 79 543 71 570 66 630 66 652 79 698 55 718 66 733 67 737 56 763 70 795 63 776 81 786 90 780 118 786 147 779 172 750 194 745 208 759 238 776 247 781 272 816 293 835 378 828 384 849 430 847 477 855 492 847 517 851 552 834 563 831 572 858 607 860 636 870 644 925 659 943 694 745 821 673 886 600 898 565 910 554 900 564 886 558 869 530 861 514 848 497 844 490 836 469 825 467 806 37 519 37 450 108 407 127 411 138 401 177 392 202 366 258 346 251 335 251 310 286 304 291 292 364 292 362 281 373 271 358 262 346 237 345 198 336 170Z" />
                        <path d="M1076 720L1120 697 1470 883 1470 1061 1432 1061 1426 1068 1421 1096 1414 1109 1401 1116 1406 1137 1388 1152 1394 1173 1376 1199 1382 1207 1403 1206 1408 1256 1426 1271 1422 1288 1401 1284 1373 1299 1367 1324 1313 1371 1250 1378 1245 1384 1255 1392 1235 1422 1190 1426 1156 1445 1143 1434 1116 1450 1099 1446 1102 1437 1084 1397 1030 1348 1041 1332 1104 1331 1080 1296 1076 1234 1067 1206 1051 1186 1034 1186 1016 1156 1010 1125 1047 1062 1098 1006 1108 862 1119 845 1102 825 1101 811 1086 792Z" />
                        <path d="M523 1226L540 1216 574 1249 569 1264 581 1279 588 1304 576 1317 575 1331 557 1355 552 1375 541 1375 537 1504 490 1510 495 1504 487 1474 487 1375 475 1350 477 1331 453 1315 460 1282 482 1264 508 1264 521 1243Z" />
                    </g>
                    <g transform="translate(978 796) scale(.333333)">
                        <path d="M110 86L148 56 162 70 138 88 135 121 122 123 116 99Z" />
                        <path d="M125 138L165 128 328 128 342 188 378 232 420 225 458 229 465 181 517 179 514 195 571 195 572 232 580 250 574 294 597 343 598 360 590 367 594 377 603 371 667 371 676 365 679 430 671 450 678 461 581 461 581 614 590 630 651 681 585 688 530 697 437 687 415 671 205 671 182 650 168 646 138 664 118 658 101 663 98 597 111 583 134 485 158 452 179 440 196 406 195 353 158 281 175 263 175 242 151 182Z" />
                    </g>
                </svg>
                <div class="vscroll">
                    <button aria-label="向上滚动">{@render glyph("up", "small")}</button>
                    <span class="track before"></span>
                    <button class="thumb" aria-label="垂直滚动"><i></i><i></i><i></i><i></i></button>
                    <span class="track"></span>
                    <button aria-label="向下滚动">{@render glyph("down", "small")}</button>
                </div>
            </div>
            <div class="view-bar">
                <button class="mode on" aria-label="数据视图">{@render glyph("dataView", "small")}</button>
                <button class="mode" aria-label="布局视图">{@render glyph("layoutView", "small")}</button>
                <span class="bar"></span>
                <button class="mode" aria-label="刷新">{@render glyph("refresh", "small")}</button>
                <button class="mode" aria-label="暂停绘制">{@render glyph("pause", "small")}</button>
                <div class="hscroll">
                    <button aria-label="向左滚动">{@render glyph("left", "small")}</button>
                    <span class="track before"></span>
                    <button class="thumb" aria-label="水平滚动"><i></i><i></i><i></i><i></i></button>
                    <span class="track"></span>
                    <button aria-label="向右滚动">{@render glyph("right", "small")}</button>
                </div>
            </div>
        </section>
    </main>

    <section class="prepare">
        <div class="dock-title pale">
            <h2>准备</h2>
            {@render dockButtons()}
        </div>
        <div class="filter">
            <div class="counters">
                {#each counters as c}
                    <button>{@render glyph(c.icon)}{c.text}</button>
                {/each}
            </div>
            <input type="search" placeholder="搜索分析结果" aria-label="搜索分析结果" />
            <button class="clear" aria-label="清除">{@render glyph("clearSearch")}</button>
        </div>
        <table>
            <thead>
                <tr>
                    <th class="flag"></th>
                    <th class="narrow">严重性</th>
                    <th class="narrow">状态</th>
                    <th class="narrow">编码</th>
                    <th>描述</th>
                    <th class="wide">名称</th>
                    <th class="wide">类型</th>
                    <th class="wide">数据框</th>
                </tr>
            </thead>
            <tbody>
                <tr><td colspan="8">此视图中没有项目可显示。</td></tr>
            </tbody>
        </table>
        <div class="summary">
            <span class="state">状态: 尚未分析</span>
            <span class="count">无项目</span>
            <label>仅显示未解决的项目<input type="checkbox" disabled /></label>
        </div>
    </section>

    <footer>
        <span class="panel"></span>
        <output>-51.799&nbsp; 20.394 十进制度</output>
    </footer>
    <div class="taskbar"><span></span><span></span></div>

    <ul class="context" role="menu">
        {#each menuItems as item}
            <li role="none" class:line={item.line}>
                <button role="menuitem" class:current={item.current} disabled={item.off}>
                    <span class="slot">{#if item.icon}{@render glyph(item.icon)}{/if}</span>
                    <span class="text">{item.label}</span>
                    {#if item.sub}{@render glyph("right", "tiny")}{/if}
                </button>
            </li>
        {/each}
    </ul>

    <div class="tip" role="tooltip">
        <strong>图层属性</strong>
        <p>显示此图层的属性</p>
    </div>
</div>

<style>
    :global(body) {
        margin: 0;
    }
    .app {
        position: relative;
        display: flex;
        flex-direction: column;
        height: 100vh;
        overflow: hidden;
        background: #f0f0f0;
        color: #000;
        font: 27px/36px "Open Sans", "Noto Sans CJK SC", sans-serif;
    }
    .app * {
        box-sizing: border-box;
    }
    button,
    input,
    select {
        margin: 0;
        padding: 0;
        border: 0;
        border-radius: 0;
        background: none;
        color: inherit;
        font: inherit;
    }
    h1,
    h2,
    p,
    ul {
        margin: 0;
        padding: 0;
        font: inherit;
    }
    .glyph {
        flex: none;
        display: block;
        width: 20px;
        height: 20px;
    }
    .glyph.small {
        width: 12px;
        height: 12px;
    }
    .glyph.tiny {
        width: 8px;
        height: 8px;
    }
    .glyph.dim {
        opacity: 0.5;
    }

    /* title bar */
    .titlebar {
        position: relative;
        flex: none;
        display: flex;
        align-items: center;
        height: 48px;
        border-bottom: 2px solid #243c5c;
        box-shadow: inset 0 -2px #9db9dc;
        background: linear-gradient(90deg, #2b5088, #143c76 20%, #1c5391 45%, #1b4b84 70%, #204a74 92%, #6d8db8);
    }
    .glass {
        position: absolute;
        left: 0;
        top: 0;
        width: 480px;
        height: 46px;
    }
    .logo {
        position: relative;
        width: 36px;
        height: 38px;
    }
    h1 {
        position: relative;
        margin-left: 6px;
        padding: 4px 2px 0 0;
        background: rgba(255, 255, 255, 0.35);
        box-shadow: 0 0 14px 6px rgba(255, 255, 255, 0.35);
        font-size: 28px;
        line-height: 28px;
    }
    .win-buttons {
        display: flex;
        align-self: flex-start;
        height: 43px;
        margin: 0 3px 0 auto;
        border: 2px solid #9fb2c8;
        border-top: 0;
        border-radius: 0 0 7px 7px;
        overflow: hidden;
    }
    .win-buttons button {
        width: 61px;
        padding-top: 2px;
        border-right: 2px solid #8ca1ba;
        background: linear-gradient(#9fb1c6, #6f8aa6 48%, #1b3d63 52%, #2c5480);
    }
    .win-buttons .quit {
        width: 108px;
        border: 0;
        background: linear-gradient(#dfa09a, #cf6d64 48%, #b22c1c 52%, #c43b2a);
    }
    .win-buttons svg {
        display: block;
        width: 22px;
        height: 22px;
        margin: 0 auto;
    }

    /* toolbars */
    .bars {
        flex: none;
        padding-top: 2px;
        background: linear-gradient(90deg, #f0f0f0, #fcfcfc);
    }
    .row {
        display: flex;
        gap: 4px;
        height: 38px;
        margin-bottom: 2px;
        padding-left: 4px;
    }
    .row.first {
        padding-left: 793px;
    }
    .row.third {
        height: 44px;
        padding-left: 1058px;
    }
    .toolbar {
        display: flex;
        align-items: center;
        border-radius: 4px;
        background: linear-gradient(#fdfdfd, #eeeeee);
    }
    .grip {
        width: 4px;
        height: 28px;
        margin-left: 3px;
        border-left: 2px dotted #bdbdbd;
    }
    .tool {
        flex: none;
        display: flex;
        align-items: center;
        justify-content: center;
        width: 25px;
        height: 25px;
    }
    .tool.active {
        border: 2px solid #3f9bf5;
        background: #dcebfa;
    }
    .tool.active.off {
        border-color: #b9bec6;
        background: #e6eef6;
    }
    .tool.drop {
        width: 39px;
        gap: 4px;
    }
    .sep {
        flex: none;
        width: 2px;
        height: 27px;
        margin: 0 3px 0 1px;
        background: #bfbfbf;
    }
    .combo {
        display: flex;
        align-items: center;
        height: 36px;
        border: 2px solid #abadb3;
        border-color: #9c9ea4 #dde3ea #dde3ea #b9bdc4;
        background: #fff;
    }
    .combo.scale {
        position: relative;
        width: 164px;
        font-family: "Liberation Serif", serif;
    }
    .combo.scale select {
        appearance: none;
        width: 100%;
        height: 32px;
        padding-left: 4px;
        outline: 0;
        font-size: 28px;
    }
    .combo.scale .glyph {
        position: absolute;
        right: 13px;
        pointer-events: none;
    }
    .combo.percent {
        justify-content: space-between;
        width: 68px;
        padding: 0 13px 0 3px;
        border-color: #b9b9b9;
    }
    .combo.percent input {
        width: 21px;
        height: 28px;
        background: #3399ff;
        color: #70757c;
        font: 20px/28px "Liberation Mono", monospace;
        text-indent: -4px;
    }
    .editor {
        display: flex;
        align-items: center;
        gap: 3px;
        padding: 0 4px 0 6px;
    }
    .overflow {
        display: flex;
        align-items: flex-end;
        justify-content: center;
        align-self: stretch;
        width: 13px;
        margin-left: 2px;
        padding-bottom: 4px;
        border-radius: 0 0 4px 0;
        background: linear-gradient(#f4f4f4, #c8c8c8 50%, #9c9c9c);
    }
    nav {
        display: flex;
        gap: 21px;
        height: 46px;
        padding-left: 13px;
        align-items: center;
    }

    /* table of contents */
    main {
        flex: 1;
        display: flex;
        gap: 5px;
        min-height: 0;
        padding-bottom: 8px;
    }
    aside {
        flex: none;
        display: flex;
        flex-direction: column;
        width: 675px;
    }
    .dock-title {
        display: flex;
        align-items: center;
        justify-content: space-between;
        height: 40px;
        padding: 0 4px;
        background: linear-gradient(90deg, #99b3d1, #b8d0eb);
    }
    .dock-title h2 {
        padding-top: 2px;
    }
    .dock-title.pale {
        background: linear-gradient(90deg, #bfcddb, #d7e4f1);
        color: #444;
    }
    .dock-buttons {
        display: flex;
        gap: 6px;
    }
    .dock-buttons button {
        display: flex;
    }
    .toc-tools {
        display: flex;
        align-items: center;
        height: 29px;
        padding-left: 4px;
        background: linear-gradient(#fcfcfc, #f0f0f0);
    }
    .toc-tools .sep {
        height: 18px;
    }
    .tree {
        flex: 1;
        width: 672px;
        padding-top: 2px;
        border: 2px solid #8a929c;
        border-left-width: 1px;
        background: #fff;
    }
    .node {
        display: flex;
        align-items: center;
        height: 38px;
        padding-left: 28px;
    }
    .node.root {
        gap: 4px;
        padding-left: 7px;
    }
    .node.symbol {
        padding-left: 57px;
    }
    .fold {
        width: 15px;
        height: 15px;
        border: 1px solid #8f959c;
        border-radius: 2px;
        background:
            linear-gradient(#3b5f9a, #3b5f9a) center / 9px 1px no-repeat,
            linear-gradient(#fff, #dcdcdc);
    }
    .node input {
        appearance: none;
        width: 13px;
        height: 13px;
        margin: 0 7px 0 6px;
        border: 1px solid #222;
        background: #fff;
    }
    .node input:checked {
        background:
            linear-gradient(45deg, transparent 40%, #111 40%, #111 60%, transparent 60%) 2px 5px / 5px 5px no-repeat,
            linear-gradient(-45deg, transparent 38%, #111 38%, #111 62%, transparent 62%) 3px 1px / 8px 8px no-repeat;
    }
    .node label {
        height: 38px;
        padding: 0 3px;
        font-size: 28px;
    }
    .node label.selected {
        background: #3399ff;
        color: #fff;
    }
    .swatch {
        width: 18px;
        height: 13px;
        border: 1px solid #6e6e6e;
    }

    /* map view */
    .view {
        flex: 1;
        display: flex;
        flex-direction: column;
        min-width: 0;
        padding-right: 2px;
    }
    .canvas {
        flex: 1;
        display: flex;
        min-height: 0;
        border: solid #7c7c7c;
        border-width: 2px 0 0 2px;
        background: #f0f0f0;
    }
    .map {
        flex: 1;
        height: 100%;
        min-width: 0;
        background: #fff;
    }
    .map path {
        fill: #f8dfce;
        stroke: #777;
        stroke-width: 1;
        vector-effect: non-scaling-stroke;
    }
    .vscroll {
        display: flex;
        flex-direction: column;
        align-items: center;
        width: 38px;
        border-left: 2px solid #e4e4e4;
    }
    .vscroll button {
        width: 34px;
        height: 38px;
    }
    .vscroll > button .glyph,
    .hscroll > button .glyph {
        margin: auto;
    }
    .track {
        flex: 412;
    }
    .vscroll .before {
        flex: 274;
    }
    .thumb {
        display: flex;
        align-items: center;
        justify-content: center;
        gap: 2px;
        border: 1px solid #989898;
    }
    .thumb i {
        background: #666;
    }
    .vscroll .thumb {
        flex: 480;
        flex-direction: column;
        background: linear-gradient(90deg, #f4f4f4 20%, #d6d6d8 25%, #c4c4c8);
    }
    .vscroll .thumb i {
        width: 12px;
        height: 2px;
    }
    .view-bar {
        display: flex;
        height: 37px;
        padding-left: 2px;
        border-top: 2px solid #e6e6e6;
    }
    .mode {
        display: flex;
        align-items: center;
        justify-content: center;
        width: 38px;
    }
    .mode.on {
        border: 2px solid #6b6b6b;
        border-radius: 4px;
        background: linear-gradient(#bcbcbc, #e4e4e4 40%);
    }
    .bar {
        width: 2px;
        margin: 0 5px 0 3px;
        background: #999;
    }
    .hscroll {
        flex: 1;
        display: flex;
        margin-right: 40px;
        background: #ececec;
    }
    .hscroll button {
        width: 36px;
    }
    .hscroll .before {
        flex: 707;
    }
    .hscroll .track:not(.before) {
        flex: 550;
    }
    .hscroll .thumb {
        flex: 665;
        background: linear-gradient(#f4f4f4 20%, #d6d6d8 25%, #d2d2d4 75%, #bdbdc0);
    }
    .hscroll .thumb i {
        width: 2px;
        height: 12px;
    }

    /* prepare panel */
    .prepare {
        flex: none;
    }
    .filter {
        display: flex;
        align-items: flex-start;
        height: 57px;
        padding-top: 1px;
    }
    .counters {
        display: flex;
        gap: 8px;
        width: 669px;
    }
    .counters button {
        display: flex;
        align-items: center;
        gap: 7px;
        width: 140px;
        height: 24px;
        padding: 3px 0 0 3px;
        border: 2px solid #7b7b7b;
        border-radius: 4px;
        background: linear-gradient(#c2c2c2, #e6e6e6 50%);
        white-space: nowrap;
    }
    .counters .glyph {
        width: 18px;
        height: 18px;
        margin: 0 -2px;
    }
    .filter input {
        flex: 1;
        height: 41px;
        margin-top: 3px;
        padding: 0 0 4px 5px;
        border: 1px solid #e3e9ef;
        border-top: 2px solid #abadb3;
        background: #fff;
        font-size: 24px;
    }
    .filter input::placeholder {
        color: #6d6d6d;
    }
    .clear {
        margin: 6px 33px 0 9px;
    }
    table {
        width: calc(100% - 7px);
        border: 2px solid #a0a0a0;
        border-width: 2px 1px;
        border-spacing: 0;
        table-layout: fixed;
        background: #fff;
    }
    th {
        height: 46px;
        padding: 0 0 0 4px;
        border-bottom: 3px solid #b4b4b4;
        border-right: 1px solid #a0a0a0;
        background: #f0f0f0;
        font-weight: 400;
        text-align: left;
    }
    .flag {
        width: 45px;
    }
    .narrow {
        width: 182px;
    }
    .wide {
        width: 274px;
    }
    td {
        height: 58px;
        padding: 0 0 6px;
        text-align: center;
    }
    .summary {
        display: flex;
        height: 42px;
        margin-right: 7px;
        border: solid #fff;
        border-width: 0 1px 2px 0;
        font-size: 23px;
        line-height: 32px;
    }
    .state {
        flex: 1;
        padding-left: 3px;
        border-right: 3px solid #fff;
    }
    .count {
        width: 324px;
        border-left: 1px solid #a0a0a0;
        border-right: 3px solid #fff;
        text-align: center;
    }
    .summary label {
        display: flex;
        justify-content: flex-end;
        width: 768px;
        gap: 9px;
        border-left: 1px solid #a0a0a0;
    }
    .summary input {
        appearance: none;
        width: 22px;
        height: 22px;
        margin-top: 5px;
        border: 2px solid #b4b4b4;
        background: linear-gradient(135deg, #dadde0, #f6f6f6);
    }
    footer {
        flex: none;
        display: flex;
        align-items: center;
        height: 40px;
        padding-top: 10px;
    }
    .panel {
        width: 2256px;
        flex: none;
    }
    .taskbar {
        flex: none;
        display: flex;
        gap: 216px;
        height: 3px;
        padding-left: 98px;
        border-top: 2px solid #5b748f;
        background: #c9dcee;
    }
    .taskbar span {
        width: 102px;
        background: #39424c;
    }

    /* layer menu */
    .context {
        position: absolute;
        left: 392px;
        top: 348px;
        width: 475px;
        padding: 2px 1px 3px;
        border: 2px solid #979797;
        background: linear-gradient(90deg, #fafafa, #efefef 47px, #fcfcfc 47px);
        box-shadow: 4px 4px 4px rgba(0, 0, 0, 0.4);
        list-style: none;
    }
    .context li.line {
        padding-bottom: 4px;
        background: linear-gradient(#c4c4c4, #c4c4c4) 54px calc(100% - 1px) / 100% 2px no-repeat;
    }
    .context button {
        display: flex;
        align-items: center;
        width: 100%;
        height: 41px;
        padding-right: 6px;
        text-align: left;
        white-space: nowrap;
    }
    .context button.current {
        height: 43px;
        outline: 2px solid #3f9bf5;
        outline-offset: -2px;
        background: #bfdcfa;
    }
    .context button:disabled {
        color: #a6a6a6;
    }
    .slot {
        width: 54px;
        padding-left: 11px;
    }
    .text {
        flex: 1;
    }
    .tip {
        position: absolute;
        left: 720px;
        top: 1143px;
        width: 218px;
        padding: 8px 5px 9px;
        border: 1px solid #767676;
        border-radius: 2px;
        background: linear-gradient(#fff, #c9d7ee);
        box-shadow: 4px 4px 3px rgba(0, 0, 0, 0.5);
        color: #4c4c4c;
    }
    .tip p {
        margin-top: 10px;
        padding-left: 9px;
        line-height: 34px;
    }
</style>
